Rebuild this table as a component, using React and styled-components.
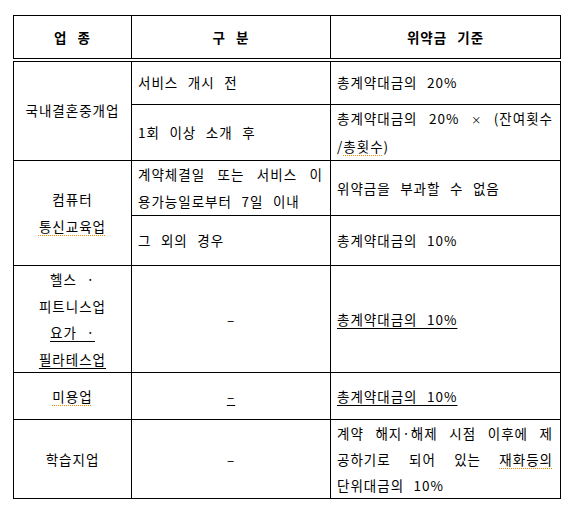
import React from 'react';
import styled, { createGlobalStyle } from 'styled-components';

const GlobalStyle = createGlobalStyle`
    body {
        margin: 0;
        background: #fff;
        font-family: "Noto Sans CJK KR", "Noto Sans", sans-serif;
        color: #000;
    }
`;

const Page = styled.div`
    padding: 15px 0 0 13px;
`;

const Table = styled.table`
    border-collapse: collapse;
    table-layout: fixed;
    width: 547px;
    font-size: 13.5px;
    letter-spacing: 1px;
    word-spacing: 5.5px;
`;

const Row = styled.tr`
    height: ${(p) => p.$h}px;
`;

const HeadCell = styled.th`
    border: 1px solid #000;
    border-bottom: 4px double #000;
    font-weight: 700;
    text-align: center;
    padding: 0;
    word-spacing: 6px;
`;

const Cell = styled.td`
    border: 1px solid #000;
    vertical-align: middle;
    text-align: ${(p) => (p.$center ? 'center' : 'left')};
    padding: ${(p) => (p.$center ? '0 2px' : '0 7px 0 6px')};
    line-height: ${(p) => p.$lh || 27}px;
`;

const Line = styled.div`
    text-align: ${(p) => (p.$justify ? 'justify' : 'inherit')};
    text-align-last: ${(p) => (p.$justify ? 'justify' : 'auto')};
    white-space: nowrap;
`;

const Under = styled.span`
    text-decoration: underline;
    text-underline-offset: 3px;
`;

const Squiggle = styled.span`
    text-decoration: underline dotted #f08a00;
    text-decoration-thickness: 1px;
    text-underline-offset: 3px;
`;

const Times = styled.span`
    font-size: 10px;
`;

const App = () => (
    <Page>
        <GlobalStyle />
        <Table>
            <colgroup>
                <col style={{ width: 118 }} />
                <col style={{ width: 199 }} />
                <col style={{ width: 230 }} />
            </colgroup>
            <tbody>
                <Row $h={44}>
                    <HeadCell>업 종</HeadCell>
                    <HeadCell>구 분</HeadCell>
                    <HeadCell>위약금 기준</HeadCell>
                </Row>
                <Row $h={45}>
                    <Cell $center rowSpan={2}>국내결혼중개업</Cell>
                    <Cell>서비스 개시 전</Cell>
                    <Cell>총계약대금의 20%</Cell>
                </Row>
                <Row $h={55}>
                    <Cell>1회 이상 소개 후</Cell>
                    <Cell>
                        <Line $justify>총계약대금의 20% <Times>×</Times> (잔여횟수</Line>
                        <Line>/<Squiggle>총횟수</Squiggle>)</Line>
                    </Cell>
                </Row>
                <Row $h={55}>
                    <Cell $center rowSpan={2}>
                        <Line>컴퓨터</Line>
                        <Line><Squiggle>통신교육업</Squiggle></Line>
                    </Cell>
                    <Cell>
                        <Line $justify>계약체결일 또는 서비스 이</Line>
                        <Line>용가능일로부터 7일 이내</Line>
                    </Cell>
                    <Cell>위약금을 부과할 수 없음</Cell>
                </Row>
                <Row $h={50}>
                    <Cell>그 외의 경우</Cell>
                    <Cell>총계약대금의 10%</Cell>
                </Row>
                <Row $h={107}>
                    <Cell $center $lh={26.5}>
                        <Line>헬스 · </Line>
                        <Line>피트니스업</Line>
                        <Line><Under>요가 · </Under></Line>
                        <Line><Under>필라테스업</Under></Line>
                    </Cell>
                    <Cell $center>–</Cell>
                    <Cell><Under>총계약대금의 10%</Under></Cell>
                </Row>
                <Row $h={47}>
                    <Cell $center><Squiggle>미용업</Squiggle></Cell>
                    <Cell $center><Under>–</Under></Cell>
                    <Cell><Under>총계약대금의 10%</Under></Cell>
                </Row>
                <Row $h={78}>
                    <Cell $center>학습지업</Cell>
                    <Cell $center>–</Cell>
                    <Cell $lh={26}>
                        <Line $justify>계약 해지·해제 시점 이후에 제</Line>
                        <Line $justify>공하기로 되어 있는 <Squiggle>재화등의</Squiggle></Line>
                        <Line>단위대금의 10%</Line>
                    </Cell>
                </Row>
            </tbody>
        </Table>
    </Page>
);

export default App;
